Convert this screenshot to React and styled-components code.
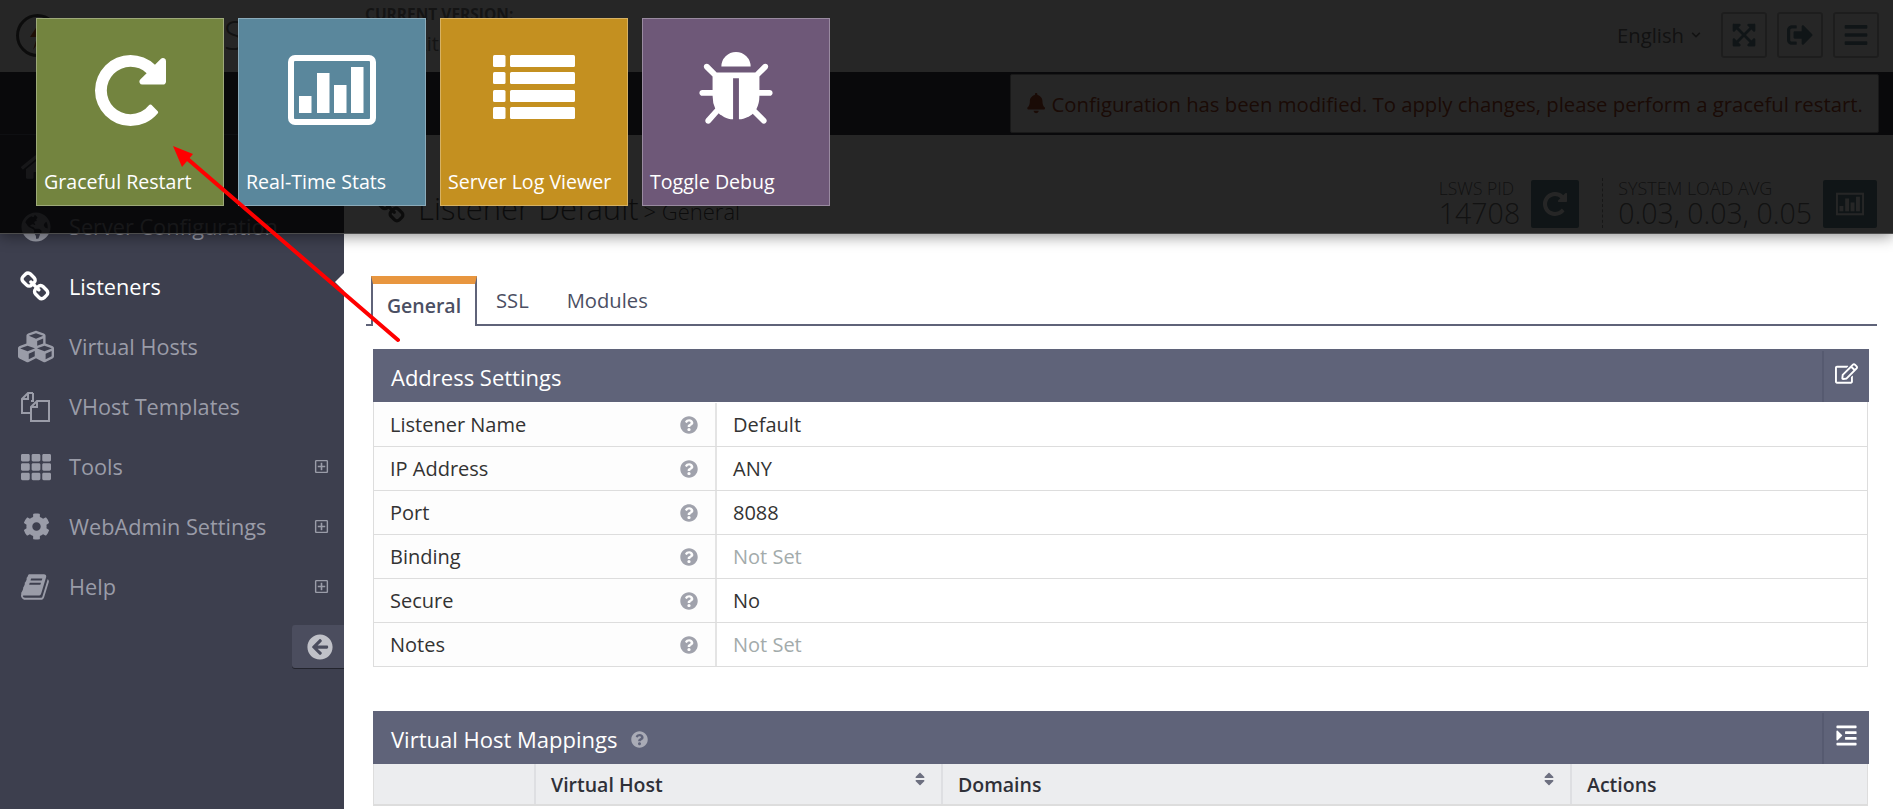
import React from 'react'
import styled, { createGlobalStyle } from 'styled-components'
import {
  FaArrowCircleLeft, FaBars, FaBell, FaChevronDown, FaCog, FaCubes, FaExpandArrowsAlt, FaGlobeAmericas,
  FaHome, FaIndent, FaQuestionCircle, FaRegEdit, FaRegPlusSquare, FaSignOutAlt, FaSort, FaTh,
} from 'react-icons/fa'

const GlobalStyle = createGlobalStyle`
  html, body { margin: 0; padding: 0; height: 100%; overflow: hidden; background: #fff; }
  body { font-family: "Open Sans", "Liberation Sans", sans-serif; color: #333; }
  * { box-sizing: border-box; }
`

const REPEAT = 'M1536 256v448q0 26-19 45t-45 19h-448q-42 0-59-40-17-39 14-69l138-138q-148-137-349-137-104 0-198.5 40.5t-163.5 109.5-109.5 163.5-40.5 198.5 40.5 198.5 109.5 163.5 163.5 109.5 198.5 40.5q119 0 225-52t179-147q7-10 23-12 15 0 25 9l137 138q9 8 9.5 20.5t-7.5 22.5q-109 132-264 204.5t-327 72.5q-156 0-298-61t-245-164-164-245-61-298 61-298 164-245 245-164 298-61q147 0 284.5 55.5t244.5 156.5l130-129q29-31 70-14 39 17 39 59z'
const BUG = 'M1696 960q0 26-19 45t-45 19h-224q0 171-67 290l208 209q19 19 19 45t-19 45q-18 19-45 19t-45-19l-198-197q-5 5-15 13t-42 28.5-65 36.5-82 29-97 13v-896h-128v896q-51 0-101.5-13.5t-87-33-66-39-43.5-32.5l-15-14-183 207q-20 21-48 21-24 0-43-16-19-18-20.5-44.5t15.5-46.5l202-227q-58-114-58-274h-224q-26 0-45-19t-19-45 19-45 45-19h224v-294l-173-173q-19-19-19-45t19-45 45-19 45 19l173 173h844l173-173q19-19 45-19t45 19 19 45-19 45l-173 173v294h224q26 0 45 19t19 45zm-480-576h-640q0-133 93.5-226.5t226.5-93.5 226.5 93.5 93.5 226.5z'
const CHAIN = 'M1456 1216q0-40-28-68l-208-208q-28-28-68-28-42 0-72 32 3 3 19 18.5t21.5 21.5 15 19 13 25.5 3.5 27.5q0 40-28 68t-68 28q-15 0-27.5-3.5t-25.5-13-19-15-21.5-21.5-18.5-19q-33 31-33 73 0 40 28 68l206 207q27 27 68 27 40 0 68-26l147-146q28-28 28-67zm-703-705q0-40-28-68l-206-207q-28-28-68-28-39 0-68 27l-147 146q-28 28-28 67 0 40 28 68l208 208q27 27 68 27 42 0 72-31-3-3-19-18.5t-21.5-21.5-15-19-13-25.5-3.5-27.5q0-40 28-68t68-28q15 0 27.5 3.5t25.5 13 19 15 21.5 21.5 18.5 19q33-31 33-73zm895 705q0 120-85 203l-147 146q-83 83-203 83-121 0-204-85l-206-207q-83-83-83-203 0-123 88-209l-88-88q-86 88-208 88-120 0-204-84l-208-208q-84-84-84-204t85-203l147-146q83-83 203-83 121 0 204 85l206 207q83 83 83 203 0 123-88 209l88 88q86-88 208-88 120 0 204 84l208 208q84 84 84 204z'
const BOOK = 'M1639 478q40 57 18 129l-275 906q-19 64-76.5 107.5t-122.5 43.5h-923q-77 0-148.5-53.5t-99.5-131.5q-24-67-2-127 0-4 3-27t4-37q1-8-3-21.5t-3-19.5q2-11 8-21t16.5-23.5 16.5-23.5q23-38 45-91.5t30-91.5q3-10 .5-30t-.5-28q3-11 17-28t17-23q21-36 42-92t25-90q1-9-2.5-32t.5-28q4-13 22-30.5t22-22.5q19-26 42.5-84.5t27.5-96.5q1-8-3-25.5t-2-26.5q2-8 9-18t18-23 17-21q8-12 16.5-30.5t15-35 16-36 19.5-32 26.5-23.5 36-11.5 47.5 5.5l-1 3q38-9 51-9h761q74 0 114 56t18 130l-274 906q-36 119-71.5 153.5t-128.5 34.5h-869q-27 0-38 15-11 16-1 43 24 70 144 70h923q29 0 56-15.5t35-41.5l300-987q7-22 5-57 38 15 59 43zm-1064 2q-4 13 2 22.5t20 9.5h608q13 0 25.5-9.5t16.5-22.5l21-64q4-13-2-22.5t-20-9.5h-608q-13 0-25.5 9.5t-16.5 22.5zm-83 256q-4 13 2 22.5t20 9.5h608q13 0 25.5-9.5t16.5-22.5l21-64q4-13-2-22.5t-20-9.5h-608q-13 0-25.5 9.5t-16.5 22.5z'

const Glyph = ({ d, box = '0 0 1792 1792', size = 24 }) => (
  <svg width={size} height={size} viewBox={box} fill="currentColor"><path d={d} /></svg>
)

const RepeatIcon = ({ size }) => <Glyph d={REPEAT} box="0 128 1536 1536" size={size} />

const FilesIcon = ({ size = 30 }) => (
  <svg width={size} height={size} viewBox="0 0 30 30" fill="none" stroke="currentColor" strokeWidth="2">
    <path d="M12 1H7L1 7v14h9M12 1v8H10M7 1v6H1" />
    <path d="M22 9h-6l-6 6v14h18V9zM16 9v6h-6" />
  </svg>
)

const StatsIcon = () => (
  <svg width="88" height="70" viewBox="0 0 88 70" fill="#fff">
    <path fillRule="evenodd" d="M7 0h74a7 7 0 0 1 7 7v56a7 7 0 0 1-7 7H7a7 7 0 0 1-7-7V7a7 7 0 0 1 7-7zm0 6a1 1 0 0 0-1 1v56a1 1 0 0 0 1 1h74a1 1 0 0 0 1-1V7a1 1 0 0 0-1-1z" />
    <rect x="11" y="41" width="12.5" height="17" />
    <rect x="29" y="18" width="12.5" height="40" />
    <rect x="46" y="30" width="12.5" height="28" />
    <rect x="63" y="12" width="12.5" height="46" />
  </svg>
)

const ListIcon = () => (
  <svg width="82" height="70" viewBox="0 0 82 70" fill="#fff">
    {[0, 17, 35, 52].map(y => (
      <g key={y}>
        <rect x="0" y={y} width="12.5" height="12" rx="1.5" />
        <rect x="17" y={y} width="65" height="12" rx="1.5" />
      </g>
    ))}
  </svg>
)

const Page = styled.div`
  position: relative;
  height: 809px;
  overflow: hidden;
  display: flex;
  flex-direction: column;
`

const Header = styled.header`
  height: 72px;
  flex: none;
  display: flex;
  align-items: center;
  background: #fff;
  padding: 0 14px 2px 16px;
`

const LogoMark = styled.div`
  width: 43px;
  height: 43px;
  flex: none;
  border: 3px solid #555;
  border-radius: 50%;
  color: #c8622a;
  display: flex;
  align-items: center;
  justify-content: center;
`

const LogoText = styled.div`
  width: 306px;
  flex: none;
  font-size: 40px;
  font-weight: 300;
  line-height: 1;
  color: #777;
  white-space: nowrap;
`

const Version = styled.div`
  flex: 1;
  color: #888;
  margin-top: -8px;
`

const VersionLabel = styled.div`
  font-size: 15.5px;
  font-weight: 700;
  line-height: 18px;
`

const VersionValue = styled.div`
  margin-top: 7px;
  font-size: 20px;
  line-height: 28px;
`

const Lang = styled.div`
  display: flex;
  align-items: center;
  gap: 7px;
  font-size: 20.3px;
  color: #777;
  margin-right: 20px;
`

const HeadBtn = styled.div`
  width: 46px;
  height: 46px;
  margin-left: ${p => (p.$first ? 0 : '10px')};
  border: 2px solid #c4c4c4;
  border-radius: 3px;
  color: #6d8f99;
  display: flex;
  align-items: center;
  justify-content: center;
  font-size: 26px;
`

const Ribbon = styled.div`
  height: 63px;
  flex: none;
  background: #3d3f4e;
  display: flex;
  align-items: center;
  color: #9a9ca8;
  padding-right: 14px;
`

const RibbonLeft = styled.div`
  width: 344px;
  height: 100%;
  flex: none;
  border-bottom: 1px solid #5f6379;
  display: flex;
  align-items: center;
  padding-left: 27px;
  gap: 156px;
  font-size: 14px;
`

const RibbonBar = styled.div`
  width: 2px;
  height: 20px;
  margin-left: 89px;
  background: #9a9ca8;
`

const Alert = styled.div`
  margin-left: auto;
  width: 869px;
  height: 59px;
  background: #fff;
  border: 1px solid #aaa;
  border-radius: 2px;
  display: flex;
  align-items: center;
  justify-content: center;
  gap: 5px;
  font-size: 20.3px;
  color: #b04a2a;
  white-space: nowrap;
`

const Body = styled.div`
  flex: 1;
  display: flex;
  min-height: 0;
`

const Sidebar = styled.aside`
  width: 344px;
  flex: none;
  background: #3d3f4e;
  padding-top: 2px;
  position: relative;
`

const NavRow = styled.div`
  position: relative;
  height: 60px;
  display: flex;
  align-items: center;
  padding-bottom: 1px;
  font-size: 21.7px;
  white-space: nowrap;
  color: ${p => (p.$active ? '#fff' : '#9a9ca8')};
  ${p => p.$active && `
    &::after {
      content: '';
      position: absolute;
      right: 0;
      top: 16px;
      border: 9px solid transparent;
      border-left-width: 0;
      border-right-color: #fff;
    }
  `}
`

const NavIcon = styled.div`
  width: 36px;
  margin-left: 18px;
  margin-right: 15px;
  flex: none;
  display: flex;
  align-items: center;
  justify-content: center;
  font-size: 30px;
`

const NavPlus = styled.div`
  margin-left: auto;
  margin-right: 15px;
  font-size: 15px;
  display: flex;
`

const Collapse = styled.div`
  position: absolute;
  right: 0;
  top: 490px;
  width: 52px;
  height: 43px;
  background: #4b4d5e;
  border-radius: 3px 0 0 3px;
  box-shadow: 0 1px 0 #23242d;
  color: #c0c1c8;
  font-size: 26px;
  display: flex;
  align-items: center;
  padding-left: 15px;
`

const Main = styled.main`
  flex: 1;
  min-width: 0;
  background: #fff;
`

const MainHead = styled.div`
  height: 141px;
  display: flex;
  align-items: flex-end;
  justify-content: space-between;
  padding: 0 16px 48px 32px;
`

const Title = styled.h1`
  margin: 0 0 -1px;
  display: flex;
  align-items: baseline;
  gap: 5px;
  font-size: 31px;
  font-weight: 300;
  line-height: 36px;
  color: #555;
  white-space: nowrap;

  small {
    font-size: 22px;
    font-weight: 300;
  }

  svg {
    align-self: center;
    margin-right: 6px;
  }
`

const Stats = styled.div`
  display: flex;
  align-items: flex-end;
`

const Stat = styled.div`
  display: flex;
  align-items: flex-end;
  gap: 11px;
  padding-left: ${p => (p.$second ? '15px' : 0)};
  margin-left: ${p => (p.$second ? '23px' : 0)};
  border-left: ${p => (p.$second ? '1px dashed #999' : 'none')};
`

const StatText = styled.div`
  color: #777;
`

const StatLabel = styled.div`
  font-size: ${p => (p.$big ? 18 : 17.5)}px;
  font-weight: 300;
  line-height: 20px;
  white-space: nowrap;
`

const StatValue = styled.div`
  font-size: 28.5px;
  font-weight: 300;
  line-height: 30px;
  white-space: nowrap;
`

const StatBtn = styled.div`
  width: ${p => (p.$wide ? '54px' : '48px')};
  height: 48px;
  background: #6d8f99;
  border-radius: 2px;
  color: #fff;
  display: flex;
  align-items: center;
  justify-content: center;
`

const TabStrip = styled.div`
  margin: 0 16px 23px 22px;
  height: 50px;
  display: flex;
  align-items: flex-end;
  border-bottom: 2px solid #5f6379;
`

const ActiveTab = styled.div`
  width: 106px;
  height: 50px;
  margin-left: 5px;
  margin-bottom: -2px;
  border: solid #5f6379;
  border-width: 8px 2px 0;
  border-top-color: #e8963f;
  background: #fff;
  font-size: 19.5px;
  font-weight: 600;
  color: #4b4f63;
  display: flex;
  align-items: center;
  justify-content: center;
  padding-top: 1px;
`

const Tab = styled.div`
  align-self: flex-start;
  font-size: 20.2px;
  color: #4b4f63;
  line-height: 24px;
  margin: 12px 0 0 ${p => p.$gap}px;
`

const Panel = styled.section`
  margin: 0 24px 44px 29px;
`

const PanelHead = styled.div`
  height: 53px;
  background: #5f6379;
  color: #fff;
  display: flex;
  align-items: center;
  padding: 3px 0 0 18px;
  font-size: 22px;
`

const PanelHelp = styled.span`
  margin-left: 14px;
  font-size: 17px;
  color: #a9abb6;
  display: flex;
`

const PanelAction = styled.div`
  margin-left: auto;
  align-self: flex-end;
  width: 47px;
  height: 51px;
  border-left: 2px solid #565a70;
  display: flex;
  align-items: center;
  justify-content: center;
  font-size: 23px;
  padding-bottom: 7px;
`

const InfoTable = styled.div`
  border: solid #ddd;
  border-width: 0 1px;
  margin-right: 1px;
  padding-top: 1px;
`

const InfoRow = styled.div`
  height: 44px;
  display: grid;
  grid-template-columns: 343px 1fr;
  border-bottom: 1px solid #ddd;
  font-size: 20px;
`

const InfoLabel = styled.div`
  background: #fdfdfd;
  border-right: 2px solid #e4e4e4;
  display: flex;
  align-items: center;
  justify-content: space-between;
  padding: 0 17px 0 16px;
  color: #333;
`

const Help = styled.span`
  font-size: 18px;
  color: #a0a2ac;
  display: flex;
`

const InfoValue = styled.div`
  display: flex;
  align-items: center;
  padding-left: 16px;
  color: ${p => (p.$muted ? '#a3abab' : '#333')};
`

const MapHead = styled.div`
  display: grid;
  grid-template-columns: 160px 407px 629px 1fr;
  height: 42px;
  background: #ecedef;
  border: solid #ddd;
  border-width: 0 1px 2px;
  margin-right: 1px;
`

const MapCell = styled.div`
  position: relative;
  display: flex;
  align-items: center;
  padding-left: 15px;
  font-size: 19.5px;
  font-weight: 600;
  color: #2f3038;
  border-left: ${p => (p.$first ? 'none' : '2px solid #dedfe2')};
`

const SortMark = styled.span`
  position: absolute;
  right: 13px;
  top: 7px;
  color: #6d7080;
  font-size: 16px;
  display: flex;
`

const Shortcuts = styled.div`
  position: absolute;
  top: 0;
  left: 0;
  right: 0;
  height: 234px;
  z-index: 10;
  background: rgba(0, 0, 0, 0.85);
  border-bottom: 1px solid #4c4c4c;
  box-shadow: 0 2px 14px rgba(0, 0, 0, 0.45);
  display: flex;
  gap: 14px;
  padding: 18px 0 0 36px;
`

const Tile = styled.div`
  width: 188px;
  height: 188px;
  background: ${p => p.$bg};
  border: 1px solid rgba(255, 255, 255, 0.3);
  color: #fff;
  display: flex;
  flex-direction: column;
`

const TileIcon = styled.div`
  height: 82px;
  margin-top: 30px;
  display: flex;
  align-items: center;
  justify-content: center;
`

const TileLabel = styled.div`
  margin-top: auto;
  padding: 0 0 11px 7px;
  font-size: 19.6px;
  line-height: 24px;
  white-space: nowrap;
`

const Pointer = styled.svg`
  position: absolute;
  inset: 0;
  z-index: 20;
  pointer-events: none;
`

const navItems = [
  { label: 'Home', icon: <FaHome /> },
  { label: 'Server Configuration', icon: <FaGlobeAmericas /> },
  { label: 'Listeners', icon: <Glyph d={CHAIN} size={32} />, active: true },
  { label: 'Virtual Hosts', icon: <FaCubes style={{ fontSize: 39 }} /> },
  { label: 'VHost Templates', icon: <FilesIcon /> },
  { label: 'Tools', icon: <FaTh />, plus: true },
  { label: 'WebAdmin Settings', icon: <FaCog style={{ fontSize: 27 }} />, plus: true },
  { label: 'Help', icon: <Glyph d={BOOK} size={30} />, plus: true },
]

const addressRows = [
  ['Listener Name', 'Default'],
  ['IP Address', 'ANY'],
  ['Port', '8088'],
  ['Binding', 'Not Set', true],
  ['Secure', 'No'],
  ['Notes', 'Not Set', true],
]

const tiles = [
  { label: 'Graceful Restart', bg: '#73843f', icon: <RepeatIcon size={71} /> },
  { label: 'Real-Time Stats', bg: '#5a879c', icon: <StatsIcon /> },
  { label: 'Server Log Viewer', bg: '#c49020', icon: <ListIcon /> },
  { label: 'Toggle Debug', bg: '#6e5878', icon: <Glyph d={BUG} size={82} /> },
]

function App() {
  return (
    <Page>
      <GlobalStyle />
      <Header>
        <LogoMark><svg width="20" height="30" viewBox="0 0 20 30" fill="currentColor"><path d="M13 0L2 17h7L5 30l14-19h-7z" /></svg></LogoMark>
        <LogoText>OpenLiteSpeed</LogoText>
        <Version>
          <VersionLabel>CURRENT VERSION:</VersionLabel>
          <VersionValue>OpenLiteSpeed 1.7.16</VersionValue>
        </Version>
        <Lang>English <FaChevronDown style={{ fontSize: 10 }} /></Lang>
        <HeadBtn $first><FaExpandArrowsAlt /></HeadBtn>
        <HeadBtn><FaSignOutAlt /></HeadBtn>
        <HeadBtn><FaBars /></HeadBtn>
      </Header>

      <Ribbon>
        <RibbonLeft>
          <svg width="24" height="26" viewBox="0 0 24 26" fill="none" stroke="currentColor" strokeWidth="2"><path d="M15 1L2 13h8L4 25l18-14h-8z" /></svg>
          <FaChevronDown style={{ fontSize: 11 }} />
          <RibbonBar />
        </RibbonLeft>
        <Alert><FaBell /> Configuration has been modified. To apply changes, please perform a graceful restart.</Alert>
      </Ribbon>

      <Body>
        <Sidebar>
          {navItems.map(item => (
            <NavRow key={item.label} $active={item.active}>
              <NavIcon>{item.icon}</NavIcon>
              {item.label}
              {item.plus && <NavPlus><FaRegPlusSquare /></NavPlus>}
            </NavRow>
          ))}
          <Collapse><FaArrowCircleLeft /></Collapse>
        </Sidebar>

        <Main>
          <MainHead>
            <Title>
              <Glyph d={CHAIN} size={31} />
              Listener Default
              <small>&gt; General</small>
            </Title>
            <Stats>
              <Stat>
                <StatText>
                  <StatLabel>LSWS PID</StatLabel>
                  <StatValue>14708</StatValue>
                </StatText>
                <StatBtn><RepeatIcon size={24} /></StatBtn>
              </Stat>
              <Stat $second>
                <StatText>
                  <StatLabel $big>SYSTEM LOAD AVG</StatLabel>
                  <StatValue>0.03, 0.03, 0.05</StatValue>
                </StatText>
                <StatBtn $wide><svg width="28" height="24" viewBox="0 0 88 70" fill="#fff"><path fillRule="evenodd" d="M0 0h88v70H0zM6 6v58h76V6z" /><path d="M11 41h12v17H11zM29 18h12v40H29zM46 30h12v28H46zM63 12h12v46H63z" /></svg></StatBtn>
              </Stat>
            </Stats>
          </MainHead>

          <TabStrip>
            <ActiveTab>General</ActiveTab>
            <Tab $gap={19}>SSL</Tab>
            <Tab $gap={38}>Modules</Tab>
          </TabStrip>

          <Panel>
            <PanelHead>
              Address Settings
              <PanelAction><FaRegEdit /></PanelAction>
            </PanelHead>
            <InfoTable>
              {addressRows.map(([label, value, muted]) => (
                <InfoRow key={label}>
                  <InfoLabel>{label}<Help><FaQuestionCircle /></Help></InfoLabel>
                  <InfoValue $muted={muted}>{value}</InfoValue>
                </InfoRow>
              ))}
            </InfoTable>
          </Panel>

          <Panel>
            <PanelHead>
              Virtual Host Mappings
              <PanelHelp><FaQuestionCircle /></PanelHelp>
              <PanelAction><FaIndent /></PanelAction>
            </PanelHead>
            <MapHead>
              <MapCell $first />
              <MapCell>Virtual Host<SortMark><FaSort /></SortMark></MapCell>
              <MapCell>Domains<SortMark><FaSort /></SortMark></MapCell>
              <MapCell>Actions</MapCell>
            </MapHead>
          </Panel>
        </Main>
      </Body>

      <Shortcuts>
        {tiles.map(tile => (
          <Tile key={tile.label} $bg={tile.bg}>
            <TileIcon>{tile.icon}</TileIcon>
            <TileLabel>{tile.label}</TileLabel>
          </Tile>
        ))}
      </Shortcuts>

      <Pointer width="1893" height="809" viewBox="0 0 1893 809">
        <line x1="398" y1="340" x2="183" y2="155" stroke="#f00" strokeWidth="4" strokeLinecap="round" />
        <polygon points="173,146 193,154 182,167" fill="#f00" />
      </Pointer>
    </Page>
  )
}

export default App
